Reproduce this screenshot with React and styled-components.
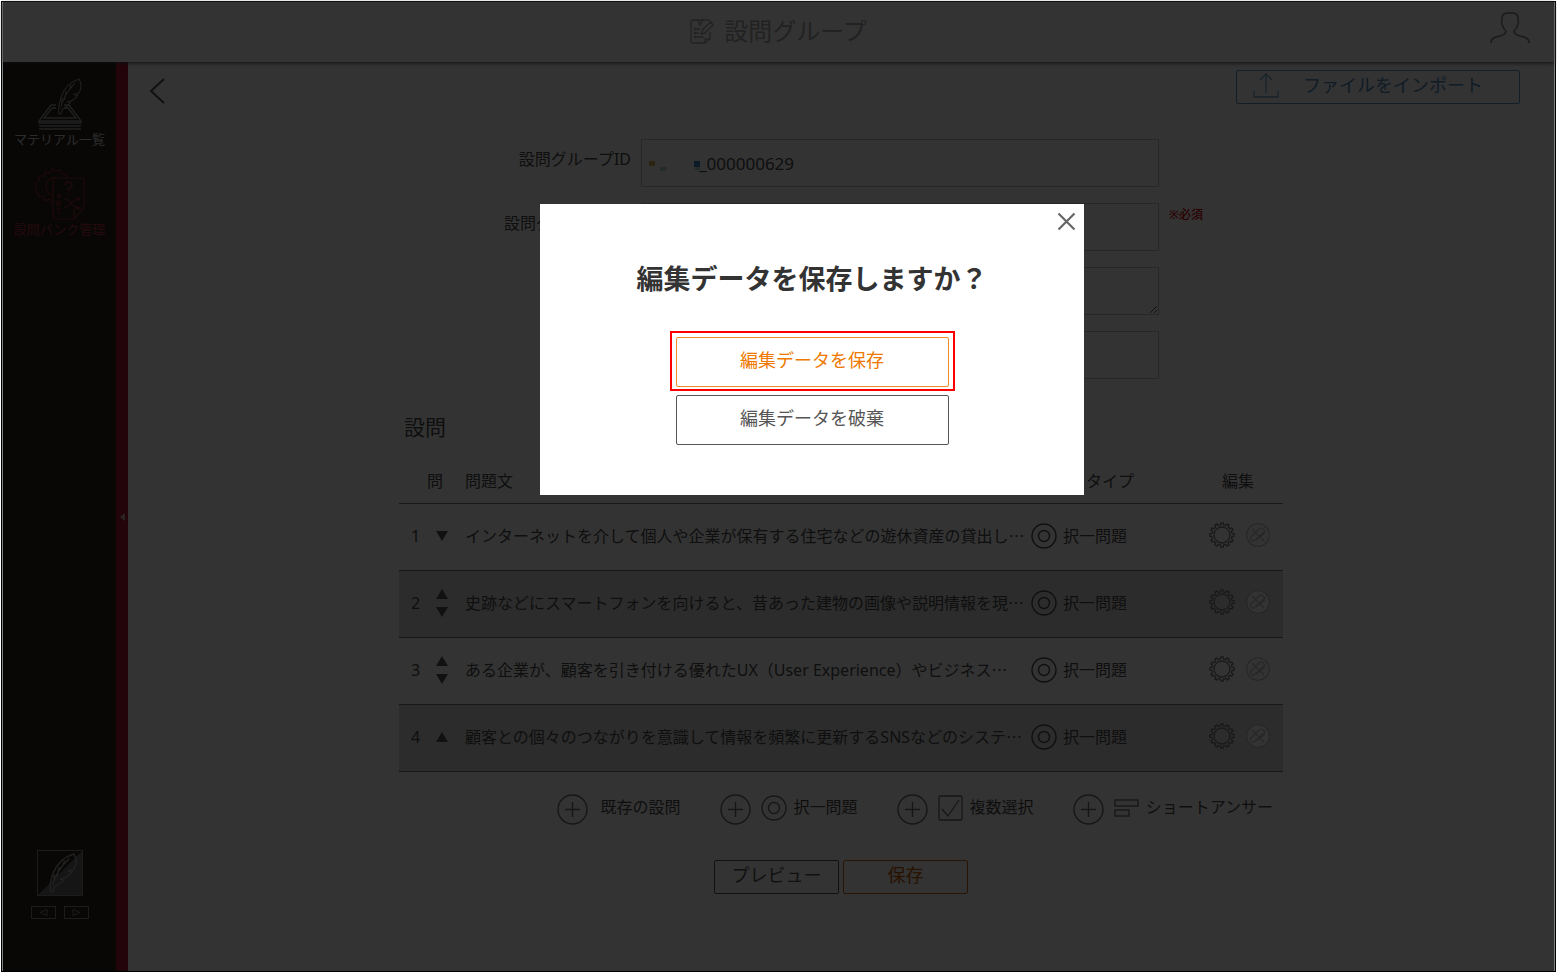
import React from "react";
import styled, { createGlobalStyle } from "styled-components";

const GlobalStyle = createGlobalStyle`
  *, *::before, *::after { box-sizing: border-box; }
  body {
    margin: 0;
    background: #fff;
    color: #4c4c4c;
    font-family: "Noto Sans", "Noto Sans CJK JP", sans-serif;
    font-size: 16px;
    line-height: 24px;
  }
  button, input, textarea { font: inherit; color: inherit; }
  button { cursor: pointer; }
  svg { display: block; fill: none; stroke: currentColor; flex: none; }
`;

/* ---------- frame ---------- */

const Page = styled.div`
  min-height: 100vh;
  padding: 1px;
  display: flex;
`;

const Frame = styled.div`
  flex: 1;
  min-width: 0;
  display: flex;
  flex-direction: column;
  border: 1px solid #000;
`;

const Shell = styled.div`
  flex: 1;
  display: flex;
  flex-direction: column;
  border: solid #788080;
  border-width: 0 1px;
`;

const Header = styled.header`
  height: 60px;
  display: grid;
  grid-template-columns: 1fr auto 1fr;
  align-items: center;
  padding: 0 24px 2px;
  box-shadow: 0 1px 4px #444;
  z-index: 1;
`;

const PageTitle = styled.h1`
  grid-column: 2;
  margin: 0;
  display: flex;
  align-items: center;
  gap: 10px;
  color: #a8a8a8;
  font-size: 24px;
  font-weight: 400;
  line-height: 36px;
`;

const UserButton = styled.button`
  justify-self: end;
  padding: 0 0 6px;
  border: 0;
  background: none;
  color: #808080;
`;

const Body = styled.div`
  flex: 1;
  display: flex;
`;

/* ---------- sidebar ---------- */

const Sidebar = styled.nav`
  width: 125px;
  flex: none;
  display: flex;
  background: #282420;
`;

const SideContent = styled.div`
  flex: 1;
  display: flex;
  flex-direction: column;
  align-items: center;
  padding: 16px 0 52px;
`;

const SideLink = styled.a`
  display: flex;
  flex-direction: column;
  align-items: center;
  margin-bottom: 20px;
  color: ${(p) => (p.$active ? "#b43246" : "#d8d8d8")};
  font-size: 13px;
  line-height: 18px;
  text-decoration: none;
  white-space: nowrap;

  svg { color: ${(p) => (p.$active ? "#8c2c3a" : "#a0a0a0")}; }
`;

const SideFooter = styled.div`
  margin-top: auto;
  display: flex;
  flex-direction: column;
  align-items: center;
  gap: 10px;
  color: #8c8c8c;
`;

const StepButtons = styled.div`
  display: flex;
  gap: 8px;
`;

const StepButton = styled.button`
  width: 25px;
  height: 13px;
  padding: 0;
  display: flex;
  align-items: center;
  justify-content: center;
  border: 1px solid #8c8c8c;
  background: none;
  color: #8c8c8c;
`;

const CollapseBar = styled.button`
  width: 12px;
  padding: 0 0 0 4px;
  border: 0;
  background: #af1432;
  color: #c8b4b4;
`;

/* ---------- main ---------- */

const Main = styled.main`
  flex: 1;
  min-width: 0;
  padding: 8px 20px 40px;
`;

const Toolbar = styled.div`
  display: flex;
  justify-content: space-between;
  align-items: flex-start;
  padding: 0 14px 0 1px;
`;

const BackButton = styled.button`
  padding: 8px 0 0;
  border: 0;
  background: none;
  color: #555;
`;

const ImportButton = styled.button`
  width: 284px;
  height: 34px;
  padding: 0 36px 4px 16px;
  display: flex;
  align-items: center;
  justify-content: space-between;
  border: 1px solid #5a96c8;
  border-radius: 2px;
  background: none;
  color: #508cbe;
  font-size: 18px;

  svg { color: #78a8cc; }
`;

const Content = styled.div`
  max-width: 884px;
  margin: 35px auto 0;
`;

const Form = styled.form`
  display: flex;
  flex-direction: column;
  gap: 16px;
`;

const Field = styled.div`
  display: grid;
  grid-template-columns: 232px 518px 1fr;
  column-gap: 10px;
`;

const Label = styled.label`
  padding-top: 8px;
  text-align: right;
`;

const InputWrap = styled.div`
  position: relative;
  display: flex;
`;

const Input = styled.input`
  width: 100%;
  height: 48px;
  padding: 0 12px 0 ${(p) => (p.$marked ? 57 : 12)}px;
  border: 1px solid #c0c0c0;
  background: none;
  font-size: 17px;
`;

const TextArea = styled.textarea`
  width: 100%;
  height: 48px;
  padding: 8px 12px;
  border: 1px solid #c0c0c0;
  background: none;
  resize: both;
`;

const IdMark = styled.svg`
  position: absolute;
  left: 8px;
  top: 20px;
  stroke: none;
`;

const Required = styled.span`
  padding-top: 2px;
  color: #d00000;
  font-size: 12px;
  line-height: 20px;
  font-weight: 500;
`;

const SectionTitle = styled.h2`
  margin: 32px 0 0 5px;
  font-size: 21px;
  font-weight: 400;
  line-height: 32px;
`;

const Table = styled.table`
  width: 100%;
  table-layout: fixed;
  border-spacing: 0;
`;

const HeadCell = styled.th`
  width: ${(p) => p.$width || "auto"};
  height: 61px;
  padding: 16px 0 0 ${(p) => p.$indent || 0}px;
  border-bottom: 1px solid #787878;
  font-weight: 400;
  text-align: left;
`;

const Row = styled.tr`
  background: ${(p) => (p.$shaded ? "#dcdcdc" : "transparent")};
`;

const Cell = styled.td`
  height: 67px;
  padding: 0 0 ${(p) => p.$lift || 0}px ${(p) => p.$indent || 0}px;
  border-bottom: 1px solid #787878;
  white-space: nowrap;
  overflow: hidden;
`;

const Inline = styled.div`
  display: flex;
  align-items: center;
  gap: ${(p) => p.$gap || 6}px;
`;

const Arrows = styled.div`
  display: flex;
  flex-direction: column;
  gap: 8px;
`;

const IconButton = styled.button`
  padding: 0;
  border: 0;
  background: none;
  color: ${(p) => p.$tone || "#555"};
`;

const Ellipsis = styled.span`
  font-family: "Noto Sans CJK JP", sans-serif;
`;

const AddBar = styled.div`
  margin-top: 22px;
  padding-right: 10px;
  display: flex;
  justify-content: flex-end;
  gap: 39px;
`;

const AddButton = styled.button`
  padding: 0;
  display: flex;
  align-items: center;
  border: 0;
  background: none;
  color: #707070;
  white-space: nowrap;

  svg + svg { margin: 0 0 4px 10px; }
`;

const AddText = styled.span`
  padding: 0 0 5px ${(p) => (p.$wide ? 13 : 7)}px;
  color: #4c4c4c;
`;

const Actions = styled.div`
  margin-top: 35px;
  display: flex;
  justify-content: center;
  gap: 4px;
`;

const OutlineButton = styled.button`
  width: ${(p) => (p.$large ? 273 : 125)}px;
  height: ${(p) => (p.$large ? 50 : 34)}px;
  padding: 0 0 4px;
  border: 1px solid ${(p) => (p.$primary ? "#ee8a28" : "#555")};
  border-radius: 2px;
  background: none;
  color: ${(p) => (p.$primary ? "#ee7800" : "#555")};
  font-size: 18px;
`;

const SaveButton = styled(OutlineButton)`
  border-color: #c86414;
  color: #c85a00;
`;

/* ---------- dialog ---------- */

const Overlay = styled.div`
  position: fixed;
  inset: 2px 3px;
  z-index: 2;
  padding: 202px 0 0 67px;
  display: flex;
  align-items: flex-start;
  justify-content: center;
  background: rgba(0, 0, 0, 0.8);
`;

const Dialog = styled.section`
  width: 544px;
  min-height: 291px;
  padding: 8px 8px 48px;
  display: flex;
  flex-direction: column;
  align-items: center;
  background: #fff;
`;

const CloseButton = styled.button`
  align-self: flex-end;
  padding: 0;
  border: 0;
  background: none;
  color: #666;
`;

const DialogTitle = styled.h2`
  margin: 28px 0 32px;
  color: #333;
  font-size: 27px;
  font-weight: 700;
  line-height: 40px;
  white-space: nowrap;
`;

const Highlight = styled.div`
  margin-bottom: 4px;
  padding: 4px 4px 2px;
  display: flex;
  border: 2px solid #f00;
`;

/* ---------- icons ---------- */

const FEATHER =
  "M5 41C4 35 5 27 8 20C12 10 20 3 30 0C34 6 33 12 29 17L23 18L28 19C25 24 21 26 15 27L19 28C16 31 12 34 9 35C9 38 8 41 5 41ZM7 33C10 23 16 13 25 5M8 31L9 22M12 24L14 14M18 13L20 7";

const FeatherDeskIcon = () => (
  <svg width="44" height="52" viewBox="0 0 44 52" strokeWidth="1.3">
    <g transform="translate(17 1) scale(.8 .86)"><path d={FEATHER} /></g>
    <path d="M18 27H13L1 43H43L31 27H26M18 30H14L6 40H38L30 30H26M1 43V45H43V43M1 48H43M1 51H43" />
  </svg>
);

const FeatherBoxIcon = () => (
  <svg width="46" height="46" viewBox="0 0 46 46">
    <path d="M45 1V45H1Z" fill="#6a6a6a" stroke="none" />
    <rect x=".5" y=".5" width="45" height="45" />
    <g transform="translate(9 4) scale(.93)"><path d={FEATHER} strokeWidth="1.6" stroke="#a0a0a0" /></g>
  </svg>
);

/* Outline of a toothed wheel centred on (c, c). */
const gearPath = (c, outer, inner, teeth) => {
  const points = [];
  for (let i = 0; i < teeth; i += 1) {
    [[-0.2, outer], [0.2, outer], [0.26, inner], [0.74, inner]].forEach(([t, r]) => {
      const a = ((i + t) / teeth) * Math.PI * 2;
      points.push(`${(c + r * Math.sin(a)).toFixed(2)} ${(c - r * Math.cos(a)).toFixed(2)}`);
    });
  }
  return `M${points.join("L")}Z`;
};

const BankIcon = () => (
  <svg width="52" height="52" viewBox="0 0 52 52" strokeWidth="1.2">
    <path d="M18 34L15 31L11 33L9 28L5 29L4 25L1 23L3 19L1 15L5 13L5 8L10 8L12 4L16 5L18 1L22 3L26 2L28 6L32 7L33 10M18 27A9 9 0 1 1 24 10" />
    <path d="M22 10H47Q50 10 50 13V40L40 51H22Q19 51 19 48V13Q19 10 22 10ZM50 40H43Q40 40 40 43V51" />
    <path d="M31 17Q31 14 34.500 14Q38 14 38 17Q38 19 34.500 21V23M34.500 25V27" strokeWidth="1.8" />
    <path d="M23 30L25 26L27 30M24 29H26M23 33H26V38H23V33M23 35.500H26M27 41H24V45H27" />
    <path d="M30 31H33L42 40H45M30 39H33L42 31H45M43 29L46 31L43 33M43 38L46 40L43 42" />
  </svg>
);

const DocumentIcon = () => (
  <svg width="24" height="25" viewBox="0 0 24 25" strokeWidth="1.4">
    <path d="M20 13V20L15 24H3Q1 24 1 22V3Q1 1 3 1H18Q20 1 20 3M15 24V20H20" />
    <path d="M11 15L13 10L21 3L23 6L15 14ZM8 1L10 6L13 1M4 10H10M4 14H9M4 18H14" />
    <path d="M4 10H6M4 14H6M4 18H6" strokeWidth="2.500" />
  </svg>
);

const UserIcon = () => (
  <svg width="40" height="32" viewBox="0 0 40 32" strokeWidth="1.5">
    <path d="M1 31C1 26 5 25 10 24C14 23 16 21 16 19C13 17 13 14 12 12Q11 10 12 9V6Q12 1 18 1H22Q28 1 28 6V9Q29 10 28 12C27 14 27 17 24 19C24 21 26 23 30 24C35 25 39 26 39 31" />
  </svg>
);

const ImportIcon = () => (
  <svg width="26" height="25" viewBox="0 0 26 25" strokeWidth="1.300">
    <path d="M1 18V24H25V18M13 20V1M7 7L13 1L19 7" />
  </svg>
);

const BackIcon = () => (
  <svg width="16" height="26" viewBox="0 0 16 26" strokeWidth="2">
    <path d="M15 1L2 13L15 25" />
  </svg>
);

const TargetIcon = () => (
  <svg width="26" height="26" viewBox="0 0 26 26" strokeWidth="1.4">
    <circle cx="13" cy="13" r="12" />
    <circle cx="13" cy="13" r="5.500" />
  </svg>
);

const CheckIcon = () => (
  <svg width="25" height="26" viewBox="0 0 25 26" strokeWidth="1.3">
    <rect x="1" y="1" width="23" height="24" rx="1" />
    <path d="M4 14L10 21L21 5" />
  </svg>
);

const ShortAnswerIcon = () => (
  <svg width="25" height="18" viewBox="0 0 25 18" strokeWidth="1.4">
    <rect x="1" y="1" width="23" height="6" />
    <rect x="1" y="11" width="14" height="6" />
  </svg>
);

const PlusIcon = () => (
  <svg width="31" height="31" viewBox="0 0 31 31" strokeWidth="1.4">
    <circle cx="15.500" cy="15.500" r="14.500" />
    <path d="M15.500 8V23M8 15.500H23" />
  </svg>
);

const GearIcon = () => (
  <svg width="26" height="26" viewBox="0 0 26 26" strokeWidth="1.3" strokeLinejoin="round">
    <path d={gearPath(13, 12.2, 10.2, 12)} />
    <circle cx="13" cy="13" r="8" />
  </svg>
);

const RemoveIcon = () => (
  <svg width="24" height="24" viewBox="0 0 24 24" strokeWidth="1.1">
    <circle cx="12" cy="12" r="11.300" fill="#fff" />
    <path d="M6 6L18 18M4 15L13 6Q15 4 17 6L19 8L8 18Q6 19 4 15ZM10 17L19 10" />
  </svg>
);

const UpIcon = () => (
  <svg width="12" height="10" viewBox="0 0 12 10"><path d="M0 10L6 0L12 10Z" fill="currentColor" stroke="none" /></svg>
);

const DownIcon = () => (
  <svg width="12" height="10" viewBox="0 0 12 10"><path d="M0 0L6 10L12 0Z" fill="currentColor" stroke="none" /></svg>
);

const CloseIcon = () => (
  <svg width="19" height="19" viewBox="0 0 19 19" strokeWidth="2.200">
    <path d="M1.500 1.500L17.500 17.500M17.500 1.500L1.500 17.500" />
  </svg>
);

/* ---------- data ---------- */

const QUESTIONS = [
  "インターネットを介して個人や企業が保有する住宅などの遊休資産の貸出し",
  "史跡などにスマートフォンを向けると、昔あった建物の画像や説明情報を現",
  "ある企業が、顧客を引き付ける優れたUX（User Experience）やビジネス",
  "顧客との個々のつながりを意識して情報を頻繁に更新するSNSなどのシステ",
];

const ADD_ITEMS = [
  { text: "既存の設問" },
  { text: "択一問題", Icon: TargetIcon },
  { text: "複数選択", Icon: CheckIcon },
  { text: "ショートアンサー", Icon: ShortAnswerIcon },
];

function QuestionRow({ index, text, last }) {
  return (
    <Row $shaded={index % 2 === 1}>
      <Cell $indent={12} $lift={2}>
        <Inline $gap={16}>
          {index + 1}
          <Arrows>
            {index > 0 && <IconButton aria-label="上へ"><UpIcon /></IconButton>}
            {!last && <IconButton aria-label="下へ"><DownIcon /></IconButton>}
          </Arrows>
        </Inline>
      </Cell>
      <Cell $lift={4}>{text}<Ellipsis>…</Ellipsis></Cell>
      <Cell $indent={4} $lift={2}>
        <Inline><TargetIcon />択一問題</Inline>
      </Cell>
      <Cell $indent={4} $lift={4}>
        <Inline $gap={11}>
          <IconButton aria-label="設定" $tone="#7c7c7c"><GearIcon /></IconButton>
          <IconButton aria-label="削除" $tone="#bcbcbc"><RemoveIcon /></IconButton>
        </Inline>
      </Cell>
    </Row>
  );
}

export default function App() {
  return (
    <Page>
      <GlobalStyle />
      <Frame>
        <Shell>
          <Header>
            <PageTitle><DocumentIcon />設問グループ</PageTitle>
            <UserButton aria-label="ユーザー"><UserIcon /></UserButton>
          </Header>
          <Body>
            <Sidebar>
              <SideContent>
                <SideLink href="#materials"><FeatherDeskIcon />マテリアル一覧</SideLink>
                <SideLink href="#bank" $active><BankIcon />設問バンク管理</SideLink>
                <SideFooter>
                  <FeatherBoxIcon />
                  <StepButtons>
                    <StepButton aria-label="前へ">
                      <svg width="9" height="7" viewBox="0 0 9 7"><path d="M8 .5L1 3.500L8 6.500Z" /></svg>
                    </StepButton>
                    <StepButton aria-label="次へ">
                      <svg width="9" height="7" viewBox="0 0 9 7"><path d="M1 .5L8 3.500L1 6.500Z" /></svg>
                    </StepButton>
                  </StepButtons>
                </SideFooter>
              </SideContent>
              <CollapseBar aria-label="メニューを閉じる">
                <svg width="5" height="8" viewBox="0 0 5 8"><path d="M5 0L0 4L5 8Z" fill="currentColor" stroke="none" /></svg>
              </CollapseBar>
            </Sidebar>
            <Main>
              <Toolbar>
                <BackButton aria-label="戻る"><BackIcon /></BackButton>
                <ImportButton><ImportIcon />ファイルをインポート</ImportButton>
              </Toolbar>
              <Content>
                <Form>
                  <Field>
                    <Label htmlFor="group-id">設問グループID</Label>
                    <InputWrap>
                      <Input id="group-id" $marked defaultValue="_000000629" />
                      <IdMark width="52" height="12" viewBox="0 0 52 12">
                        <path d="M0 2H6V7H0Z" fill="#d2b450" />
                        <path d="M11 8H17V12H11ZM46 7H51V11H46Z" fill="#b4d8d8" />
                        <path d="M45 2H51V8H45Z" fill="#3c82d2" />
                      </IdMark>
                    </InputWrap>
                  </Field>
                  <Field>
                    <Label htmlFor="group-name">設問グループ名称</Label>
                    <Input id="group-name" />
                    <Required>※必須</Required>
                  </Field>
                  <Field>
                    <Label htmlFor="group-note">説明</Label>
                    <TextArea id="group-note" />
                  </Field>
                  <Field>
                    <Label htmlFor="group-tag">タグ</Label>
                    <Input id="group-tag" />
                  </Field>
                </Form>
                <SectionTitle>設問</SectionTitle>
                <Table>
                  <thead>
                    <tr>
                      <HeadCell $width="66px" $indent={28}>問</HeadCell>
                      <HeadCell>問題文</HeadCell>
                      <HeadCell $width="178px" $indent={59}>タイプ</HeadCell>
                      <HeadCell $width="78px" $indent={17}>編集</HeadCell>
                    </tr>
                  </thead>
                  <tbody>
                    {QUESTIONS.map((text, i) => (
                      <QuestionRow key={text} index={i} text={text} last={i === QUESTIONS.length - 1} />
                    ))}
                  </tbody>
                </Table>
                <AddBar>
                  {ADD_ITEMS.map(({ text, Icon }) => (
                    <AddButton key={text}>
                      <PlusIcon />
                      {Icon && <Icon />}
                      <AddText $wide={!Icon}>{text}</AddText>
                    </AddButton>
                  ))}
                </AddBar>
                <Actions>
                  <OutlineButton>プレビュー</OutlineButton>
                  <SaveButton>保存</SaveButton>
                </Actions>
              </Content>
            </Main>
          </Body>
        </Shell>
      </Frame>
      <Overlay>
        <Dialog role="dialog" aria-modal="true" aria-labelledby="dialog-title">
          <CloseButton aria-label="閉じる"><CloseIcon /></CloseButton>
          <DialogTitle id="dialog-title">編集データを保存しますか？</DialogTitle>
          <Highlight>
            <OutlineButton $large $primary>編集データを保存</OutlineButton>
          </Highlight>
          <OutlineButton $large>編集データを破棄</OutlineButton>
        </Dialog>
      </Overlay>
    </Page>
  );
}
